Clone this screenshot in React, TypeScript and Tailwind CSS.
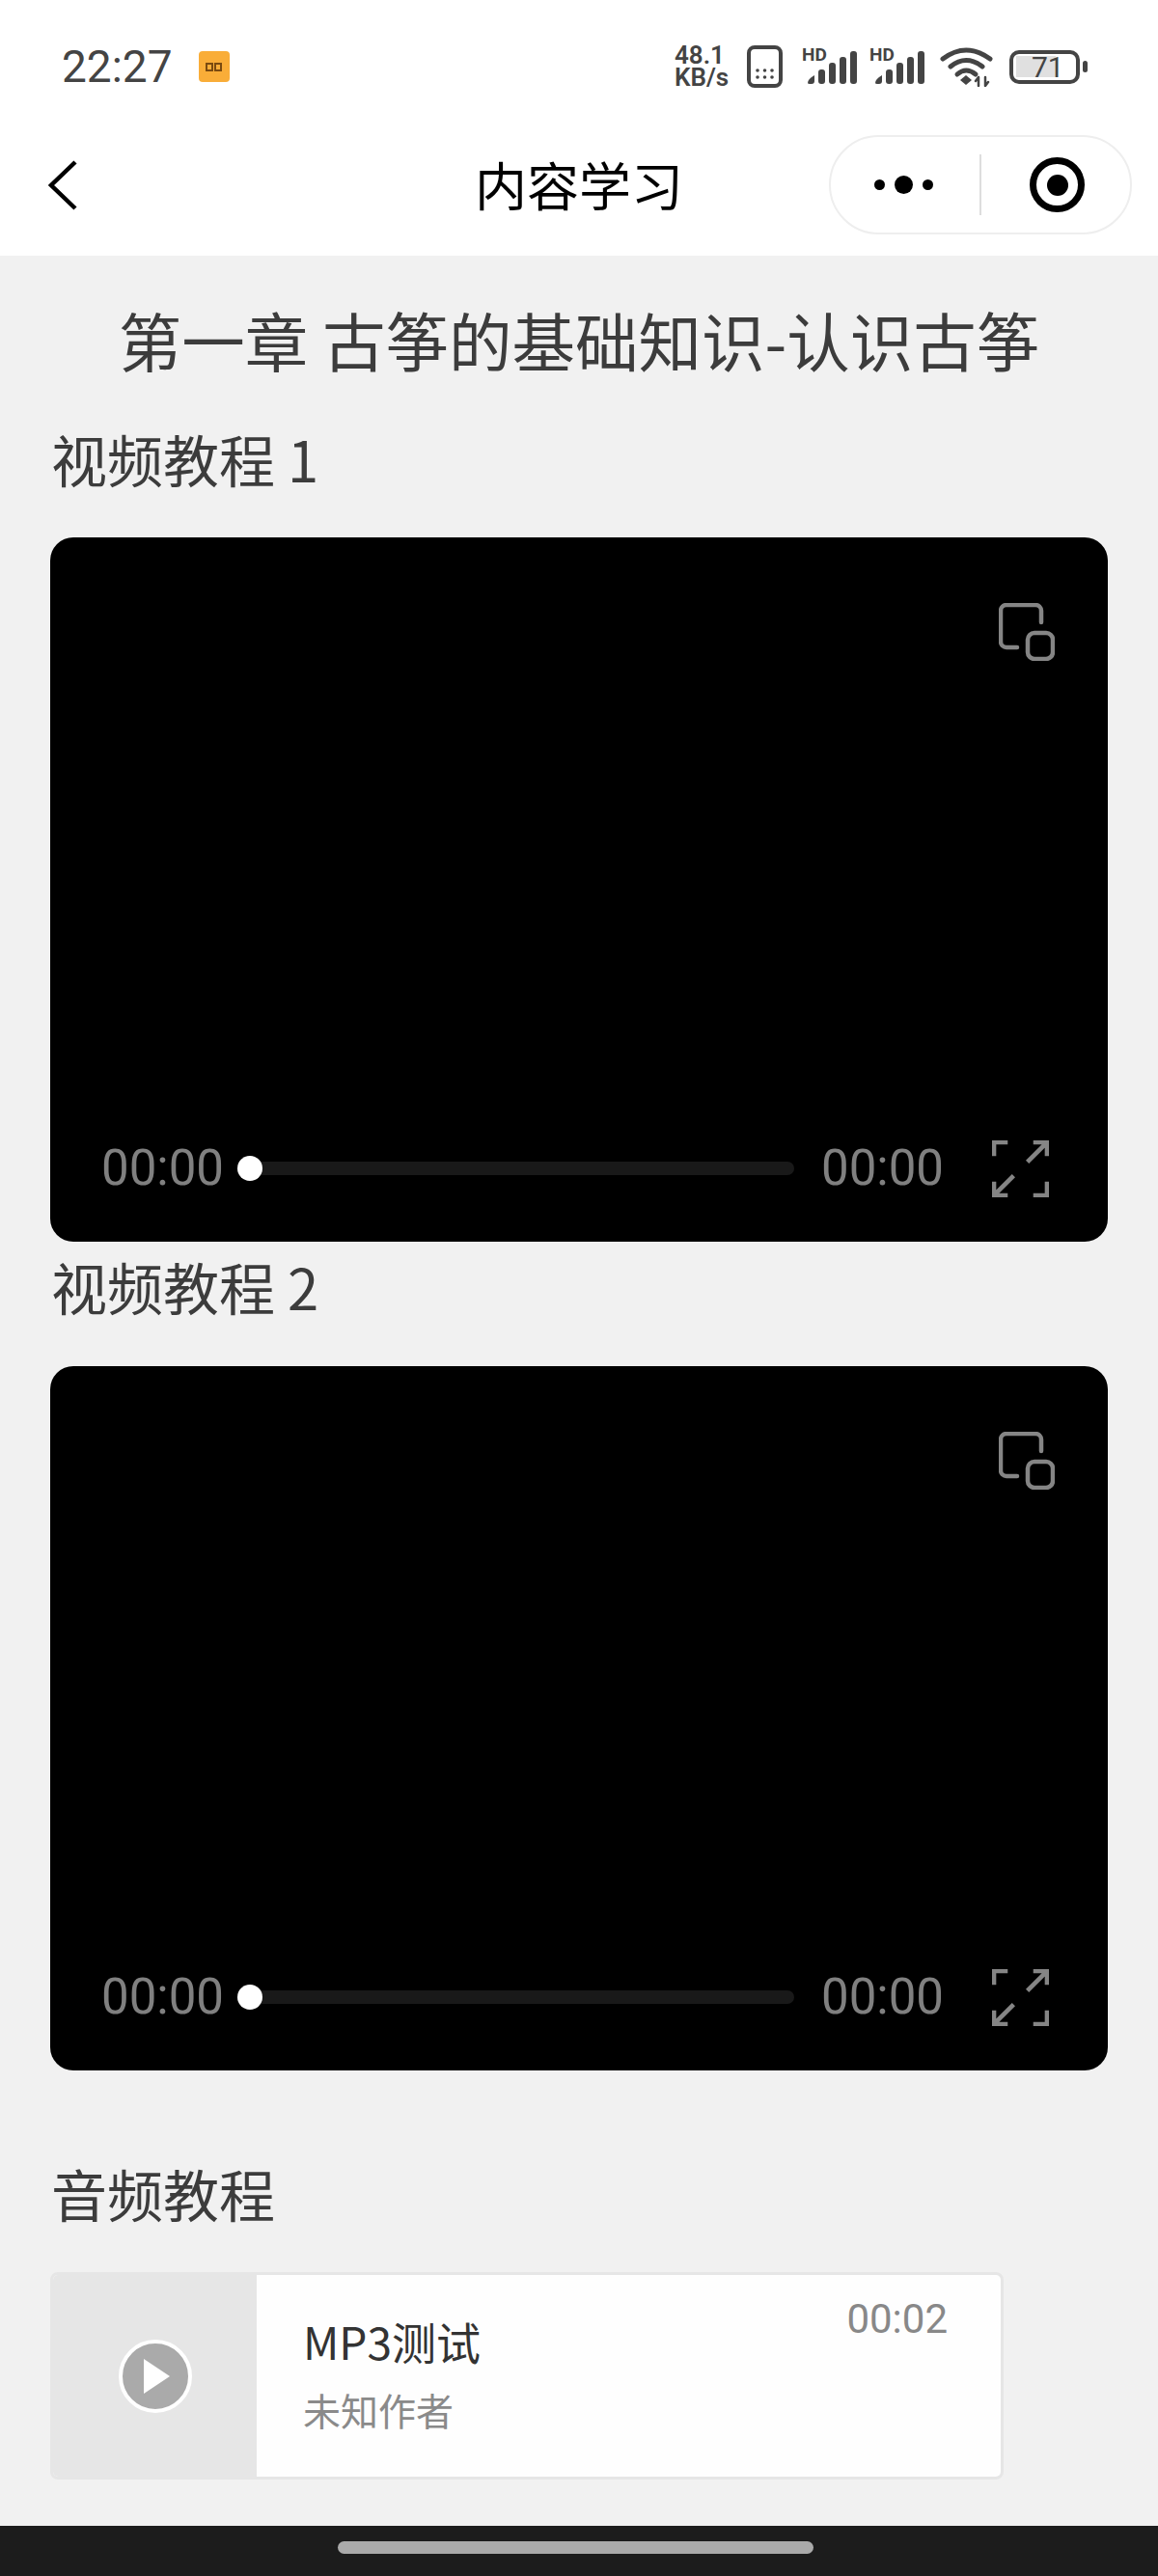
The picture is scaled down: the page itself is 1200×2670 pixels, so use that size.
const cjk = "font-['Noto_Sans_CJK_SC','Noto_Sans',sans-serif]";

const SignalIcon = ({ className }: { className: string }) => (
  <div className={`relative w-[58px] h-[36px] ${className}`}>
    <span className="absolute left-0 top-[-4px] text-[19px] leading-[20px] font-bold text-[#444444] font-['Roboto',sans-serif]">HD</span>
    <svg className="absolute left-[6px] top-[2px]" width="52" height="34" viewBox="0 0 52 34" fill="#444444">
      <path d="M0 33 Q0 29 7 25 V31 Q7 34 4 34 H2 Q0 34 0 33 Z" />
      <rect x="11" y="19" width="7" height="15" rx="3" />
      <rect x="22" y="12" width="7" height="22" rx="3" />
      <rect x="33" y="6" width="7" height="28" rx="3" />
      <rect x="44" y="0" width="7" height="34" rx="3" />
    </svg>
  </div>
);

const StatusIcons = () => (
  <div className="flex items-center">
    <div className="font-['Roboto',sans-serif] text-[#444444] w-[56px] h-[46px] font-semibold text-[26px] leading-[23px]">
      48.1<br />KB/s
    </div>
    <svg className="ml-[19px]" width="37" height="44" viewBox="0 0 37 44">
      <rect x="2" y="2" width="33" height="40" rx="6" fill="none" stroke="#444444" strokeWidth="4" />
      <g fill="#444444">
        <circle cx="11" cy="26" r="1.8" /><circle cx="18.5" cy="26" r="1.8" /><circle cx="26" cy="26" r="1.8" />
        <circle cx="11" cy="33" r="1.8" /><circle cx="18.5" cy="33" r="1.8" /><circle cx="26" cy="33" r="1.8" />
      </g>
    </svg>
    <SignalIcon className="ml-[20px]" />
    <SignalIcon className="ml-[12px]" />
    <svg className="ml-[15px]" width="55" height="42" viewBox="0 0 55 42" fill="none" stroke="#444444" strokeLinecap="round">
      <path d="M3 13 Q27 -5 52 13" strokeWidth="5" />
      <path d="M11 21 Q27 8 44 21" strokeWidth="5" />
      <path d="M18 29 Q27 21 37 29" strokeWidth="5" />
      <path d="M27 30 L33 35 L27 40 L21 35 Z" fill="#444444" stroke="none" />
      <path d="M40 32 V41 M40 32 L37 36 M47 41 V32 M47 41 L50 37" strokeWidth="2.5" />
    </svg>
    <div className="ml-[17px] relative w-[73px] h-[35px] border-[4px] border-[#444444] rounded-[10px]">
      <div className="absolute left-[3px] top-[2px] w-[41px] h-[22px] bg-[#e0e0e0]" />
      <span className="absolute left-[19px] top-[-2px] text-[30px] leading-[32px] text-[#444444] font-['Roboto',sans-serif]">71</span>
    </div>
    <div className="ml-[3px] w-[5px] h-[12px] rounded-full bg-[#444444]" />
  </div>
);

const VideoCard = () => (
  <div className="relative h-[730px] rounded-[24px] bg-black flex flex-col justify-end pl-[53px] pb-[47px]">
    <svg className="absolute right-[55px] top-[68px]" width="58" height="60" viewBox="0 0 58 60" fill="none" stroke="#858585" strokeWidth="4.5" strokeLinecap="round">
      <path d="M19 46 H8 a6 6 0 0 1 -6 -6 V8 a6 6 0 0 1 6 -6 H38 a6 6 0 0 1 6 6 V20" />
      <rect x="30" y="31" width="26" height="27" rx="7" />
    </svg>
    <div className="flex items-center h-[58px] font-['Roboto',sans-serif] text-[51px] leading-[58px] text-[#808080]">
      <span className="w-[126px] whitespace-nowrap">00:00</span>
      <div className="relative ml-[15px] w-[577px] h-[14px] rounded-full bg-[#191919]">
        <div className="absolute left-0 top-[-6px] w-[26px] h-[26px] rounded-full bg-white" />
      </div>
      <span className="ml-[28px] w-[126px] whitespace-nowrap">00:00</span>
      <svg className="ml-[51px]" width="59" height="59" viewBox="0 0 58 58" fill="none" stroke="#858585" strokeWidth="4.5">
        <path d="M2 16 V2 H16" />
        <path d="M42 2 H56 V16 M56 2 L36 22" />
        <path d="M2 42 V56 H16 M2 56 L22 36" />
        <path d="M42 56 H56 V42" />
      </svg>
    </div>
  </div>
);

const SectionLabel = ({ children, className }: { children: string; className: string }) => (
  <h2 className={`text-[58px] leading-[70px] text-[#3c3c3c] ${className}`}>{children}</h2>
);

export default function App() {
  return (
    <div className={`w-[1200px] h-[2670px] flex flex-col bg-[#f1f1f1] ${cjk}`}>
      {/* status bar + nav */}
      <header className="h-[265px] bg-white">
        <div className="h-[138px] flex items-center justify-between pl-[64px] pr-[73px]">
          <div className="flex items-center">
            <span className="text-[46px] leading-[50px] text-[#444444] font-['Roboto',sans-serif]">22:27</span>
            <div className="ml-[27px] w-[32px] h-[32px] rounded-[4px] bg-[#f9ad38] flex items-center justify-center">
              <div className="flex gap-[1px]">
                <div className="w-[8px] h-[9px] border-[2px] border-[#7a4a10]" />
                <div className="w-[8px] h-[9px] border-[2px] border-[#7a4a10]" />
              </div>
            </div>
          </div>
          <StatusIcons />
        </div>
        <div className="grid grid-cols-[1fr_auto_1fr] items-center h-[103px] mt-[2px]">
          <svg className="ml-[50px]" width="30" height="52" viewBox="0 0 30 52" fill="none" stroke="#000000" strokeWidth="4.5">
            <path d="M28 2 L3 26 L28 50" />
          </svg>
          <h1 className="text-[54px] leading-[70px] text-black mt-[-2px]">内容学习</h1>
          <div className="justify-self-end mr-[27px] w-[314px] h-[103px] rounded-full border-[2px] border-[#eeeeee] flex items-center">
            <div className="w-[154px] flex items-center justify-center gap-[10px] pr-[3px]">
              <div className="w-[11px] h-[11px] rounded-full bg-black" />
              <div className="w-[19px] h-[19px] rounded-full bg-black" />
              <div className="w-[11px] h-[11px] rounded-full bg-black" />
            </div>
            <div className="w-[2px] h-[63px] bg-[#dddddd]" />
            <div className="flex-1 flex items-center justify-center pl-[3px]">
              <div className="w-[57px] h-[57px] rounded-full border-[7px] border-black flex items-center justify-center">
                <div className="w-[22px] h-[22px] rounded-full bg-black" />
              </div>
            </div>
          </div>
        </div>
      </header>

      <main className="flex-1 px-[52px]">
        <h1 className="mt-[42px] text-center text-[65.5px] leading-[90px] text-[#3c3c3c] whitespace-nowrap">第一章 古筝的基础知识-认识古筝</h1>
        <SectionLabel className="mt-[43px] mb-[47px] ml-[1px]">视频教程 1</SectionLabel>
        <VideoCard />
        <SectionLabel className="mt-[11px] mb-[48px] ml-[1px]">视频教程 2</SectionLabel>
        <VideoCard />
        <SectionLabel className="mt-[92px] mb-[47px] ml-[1px]">音频教程</SectionLabel>

        <div className="w-[988px] h-[215px] flex border-[3px] border-[#e6e6e6] rounded-[8px] bg-[#fefefe] overflow-hidden">
          <div className="w-[211px] bg-[#e6e6e6] flex items-center justify-center">
            <div className="w-[76px] h-[76px] rounded-full bg-[#aaaaaa] border-[4px] border-white flex items-center justify-center pl-[4px]">
              <svg width="27" height="36" viewBox="0 0 27 36"><path d="M0 0 L27 18 L0 36 Z" fill="#ffffff" /></svg>
            </div>
          </div>
          <div className="flex-1 relative pl-[48px] pt-[37px]">
            <div className="text-[46px] leading-[62px] text-[#333333]">MP3测试</div>
            <div className="text-[39px] leading-[56px] text-[#8a8a8a] mt-[12px]">未知作者</div>
            <span className="absolute right-[55px] top-[21px] text-[42px] leading-[50px] text-[#888888] font-['Roboto',sans-serif]">00:02</span>
          </div>
        </div>
      </main>

      <footer className="h-[52px] bg-[#1c1c1c] flex items-start justify-center pt-[16px]">
        <div className="w-[493px] h-[13px] rounded-full bg-[#aaaaaa] ml-[-7px]" />
      </footer>
    </div>
  );
}
